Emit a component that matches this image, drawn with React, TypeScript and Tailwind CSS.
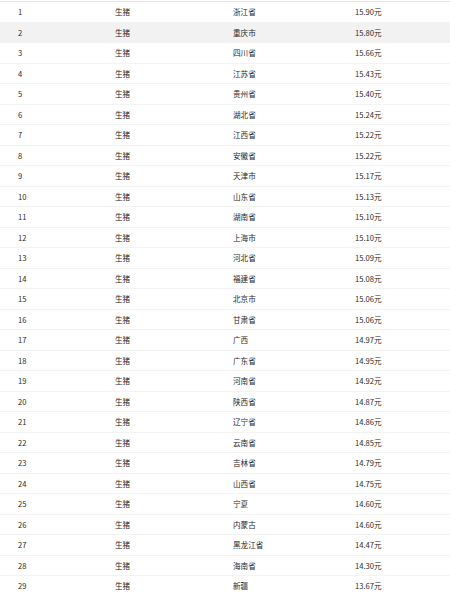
import React from "react";

interface PriceRow {
  rank: number;
  name: string;
  region: string;
  price: string;
}

const regions: [string, string][] = [
  ["浙江省", "15.90"],
  ["重庆市", "15.80"],
  ["四川省", "15.66"],
  ["江苏省", "15.43"],
  ["贵州省", "15.40"],
  ["湖北省", "15.24"],
  ["江西省", "15.22"],
  ["安徽省", "15.22"],
  ["天津市", "15.17"],
  ["山东省", "15.13"],
  ["湖南省", "15.10"],
  ["上海市", "15.10"],
  ["河北省", "15.09"],
  ["福建省", "15.08"],
  ["北京市", "15.06"],
  ["甘肃省", "15.06"],
  ["广西", "14.97"],
  ["广东省", "14.95"],
  ["河南省", "14.92"],
  ["陕西省", "14.87"],
  ["辽宁省", "14.86"],
  ["云南省", "14.85"],
  ["吉林省", "14.79"],
  ["山西省", "14.75"],
  ["宁夏", "14.60"],
  ["内蒙古", "14.60"],
  ["黑龙江省", "14.47"],
  ["海南省", "14.30"],
  ["新疆", "13.67"],
];

const rows: PriceRow[] = regions.map(([region, price], i) => ({
  rank: i + 1,
  name: "生猪",
  region,
  price,
}));

export default function App() {
  return (
    <div
      className="w-[450px] h-[596px] overflow-hidden bg-white pt-px text-[7.6px] text-[#2a2a2a]"
      style={{ fontFamily: '"Noto Sans CJK SC", "Noto Sans", sans-serif' }}
    >
      <div className="border-t border-[#e6e6e6]">
        {rows.map((r) => (
          <div
            key={r.rank}
            className={`flex items-center h-[20.5px] border-b border-[#f3f3f3] ${
              r.rank === 2 ? "bg-[#f2f2f2]" : "bg-white"
            }`}
          >
            <div className="w-[115px] pl-[18px]">{r.rank}</div>
            <div className="w-[118px]">{r.name}</div>
            <div className="w-[122px]">{r.region}</div>
            <div className="flex-1">{r.price}元</div>
          </div>
        ))}
      </div>
    </div>
  );
}
